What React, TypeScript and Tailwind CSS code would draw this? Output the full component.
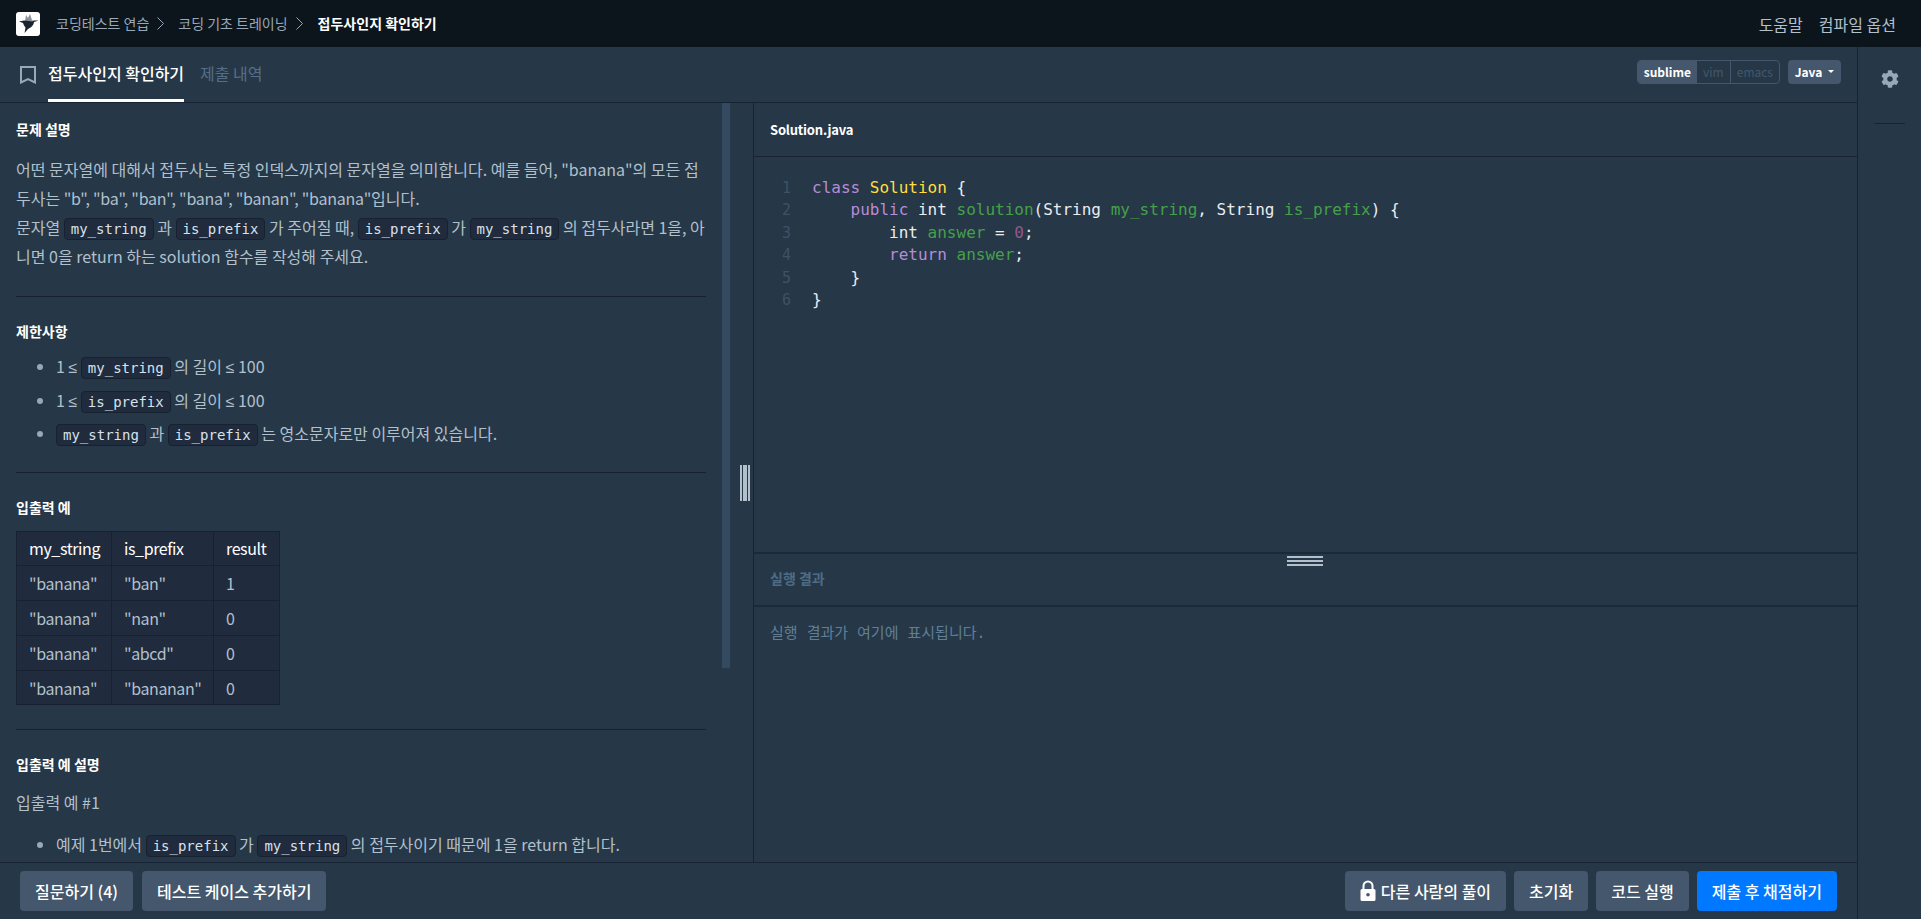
import { FaCog } from "react-icons/fa";

const sans = "font-['Noto_Sans_CJK_KR','Noto_Sans',sans-serif]";
const mono = "font-['DejaVu_Sans_Mono','Noto_Sans_CJK_KR',monospace]";

function Code({ children }: { children: string }) {
  return (
    <code className={`${mono} inline-block rounded-[4px] border border-[#172130] bg-[#202b3d] px-[6px] text-[14px] leading-[20px] text-[#d7e2eb]`}>
      {children}
    </code>
  );
}

function Le() {
  return <span className="font-['Liberation_Sans',sans-serif]">≤</span>;
}

function Heading({ children, className = "" }: { children: string; className?: string }) {
  return <h5 className={`text-[14px] leading-[20px] font-bold text-white ${className}`}>{children}</h5>;
}

function Logo() {
  return (
    <div className="flex h-6 w-6 items-center justify-center rounded-[3px] bg-white">
      <svg viewBox="0 0 24 24" className="h-6 w-6">
        <path fill="#8a929c" d="M9 9 10 3l2 3 2-4 2 6 2 1-6 3z" />
        <path fill="#1b2330" d="M3 9.500 8 8.500l5 .5 3 .5 2-1h4.500L18 10c-.5 4-4 6-6 7l-3.500 4 1-5.500C8 14 7.500 12 7 11z" />
      </svg>
    </div>
  );
}

function Lock() {
  return (
    <svg viewBox="0 0 16 22" className="h-[22px] w-4">
      <path fill="none" stroke="white" strokeWidth="2" d="M3.500 9V6a4.500 4.500 0 0 1 9 0v3" />
      <path fill="white" fillRule="evenodd" d="M2 9h12a1.500 1.500 0 0 1 1.500 1.500v9A1.500 1.500 0 0 1 14 21H2a1.500 1.500 0 0 1-1.500-1.500v-9A1.500 1.500 0 0 1 2 9zm6 4a1.800 1.800 0 1 0 0 3.600A1.800 1.800 0 0 0 8 13z" />
    </svg>
  );
}

function Crumb({ className = "" }: { className?: string }) {
  return (
    <svg viewBox="0 0 7 13" className={`h-[13px] w-[7px] ${className}`}>
      <path fill="none" stroke="#98a8b9" strokeWidth="1" d="M.5.500 6.500 6.500.5 12.500" />
    </svg>
  );
}

const rows = [
  ['"banana"', '"ban"', "1"],
  ['"banana"', '"nan"', "0"],
  ['"banana"', '"abcd"', "0"],
  ['"banana"', '"bananan"', "0"],
];

function ExampleTable() {
  return (
    <table className="mb-6 w-[264px] table-fixed border-collapse bg-[#202b3d] text-[16px] tracking-[-0.4px]">
      <thead>
        <tr className="h-[34.8px] text-white">
          <th className="w-[95px] border border-[#172130] px-3 text-left font-normal">my_string</th>
          <th className="w-[102px] border border-[#172130] px-3 text-left font-normal">is_prefix</th>
          <th className="border border-[#172130] px-3 text-left font-normal">result</th>
        </tr>
      </thead>
      <tbody>
        {rows.map((r) => (
          <tr key={r[1]} className="h-[34.8px]">
            {r.map((c, i) => (
              <td key={i} className="border border-[#172130] px-3 whitespace-nowrap">{c}</td>
            ))}
          </tr>
        ))}
      </tbody>
    </table>
  );
}

function Problem() {
  const li = "h-[33.5px] leading-[33.5px]";
  return (
    <div className="relative flex-1 overflow-hidden">
      <div className="w-[722px] px-4 pt-4 text-[16px] text-[#b2c0cc]">
        <Heading className="mb-4">문제 설명</Heading>
        <p className="mb-[25px] leading-[29px]">
          어떤 문자열에 대해서 접두사는 특정 인덱스까지의 문자열을 의미합니다. 예를 들어, "banana"의 모든 접두사는{" "}
          <span className="tracking-[-0.25px]">"b", "ba", "ban", "bana", "banan", "banana"</span>입니다.
          <br />
          문자열 <Code>my_string</Code> 과 <Code>is_prefix</Code> 가 주어질 때, <Code>is_prefix</Code> 가 <Code>my_string</Code> 의 접두사라면 1을, 아니면 0을 return 하는 solution 함수를 작성해 주세요.
        </p>
        <hr className="mb-6 border-[#172130]" />

        <Heading className="mb-[9px]">제한사항</Heading>
        <ul className="mb-[21px] list-disc pl-10 marker:text-[#98a8b9]">
          <li className={li}>1 <Le /> <Code>my_string</Code> 의 길이 <Le /> 100</li>
          <li className={li}>1 <Le /> <Code>is_prefix</Code> 의 길이 <Le /> 100</li>
          <li className={li}><Code>my_string</Code> 과 <Code>is_prefix</Code> 는 영소문자로만 이루어져 있습니다.</li>
        </ul>
        <hr className="mb-6 border-[#172130]" />

        <Heading className="mb-[14px]">입출력 예</Heading>
        <ExampleTable />
        <hr className="mb-6 border-[#172130]" />

        <Heading className="mb-[14px]">입출력 예 설명</Heading>
        <p className="mb-[11px] leading-[29px]">입출력 예 #1</p>
        <ul className="list-disc pl-10 marker:text-[#98a8b9]">
          <li className={li}>예제 1번에서 <Code>is_prefix</Code> 가 <Code>my_string</Code> 의 접두사이기 때문에 1을 return 합니다.</li>
        </ul>
      </div>
      {/* scrollbar thumb */}
      <div className="absolute top-0 left-[722px] h-[565px] w-2 bg-[#344a60]" />
    </div>
  );
}

function CodeEditor() {
  const plain = "text-[#e8edf2]";
  const kw = "text-[#b78cd8]";
  const green = "text-[#45a04a]";
  return (
    <div className={`${mono} flex h-[395px] pt-5 text-[16px] leading-[22.4px]`}>
      <div className="w-[58px] pr-[21px] text-right text-[15px] text-[#3e5266]">
        {[1, 2, 3, 4, 5, 6].map((n) => (
          <div key={n}>{n}</div>
        ))}
      </div>
      <pre className={`${mono} ${plain} ml-0`}>
        <span className={kw}>class</span> <span className="text-[#ffdf3d]">Solution</span> {"{\n"}
        {"    "}<span className={kw}>public</span> int <span className={green}>solution</span>(String <span className={green}>my_string</span>, String <span className={green}>is_prefix</span>) {"{\n"}
        {"        "}int <span className={green}>answer</span> = <span className="text-[#94578a]">0</span>;{"\n"}
        {"        "}<span className={kw}>return</span> <span className={green}>answer</span>;{"\n"}
        {"    }\n"}
        {"}"}
      </pre>
    </div>
  );
}

function Results() {
  return (
    <div className="relative flex flex-1 flex-col">
      <div className="absolute top-[4px] left-[533px] flex h-[10px] w-9 flex-col justify-between">
        <div className="h-[2px] bg-[#b2c0cc]" />
        <div className="h-[2px] bg-[#b2c0cc]" />
        <div className="h-[2px] bg-[#b2c0cc]" />
      </div>
      <div className="flex h-[55px] items-center border-t-2 border-b-2 border-[#1b2a3b] px-4 pb-[3px] text-[14px] font-bold text-[#4f6b85]">실행 결과</div>
      <div className={`${mono} px-4 pt-[15px] text-[15px] leading-[22px] text-[#5f7f98]`}>실행 결과가 여기에 표시됩니다.</div>
    </div>
  );
}

function Btn({ children, className = "bg-[#44576c]" }: { children: React.ReactNode; className?: string }) {
  return (
    <button className={`flex h-10 items-center gap-[5px] rounded-[4px] px-[15px] text-[16px] font-medium text-white ${className}`}>
      {children}
    </button>
  );
}

export default function App() {
  return (
    <div className={`${sans} flex h-[919px] w-full flex-col overflow-hidden bg-[#263747]`}>
      <header className="flex h-[47px] shrink-0 items-center justify-between bg-[#0c151c] pr-[25px] pl-4">
        <div className="flex items-center text-[14px] text-[#98a8b9]">
          <Logo />
          <span className="ml-4">코딩테스트 연습</span>
          <Crumb className="mr-[14px] ml-2" />
          <span>코딩 기초 트레이닝</span>
          <Crumb className="mr-[15px] ml-2" />
          <span className="font-bold text-white">접두사인지 확인하기</span>
        </div>
        <div className="flex gap-4 text-[16px] text-[#b2c0cc]">
          <span>도움말</span>
          <span>컴파일 옵션</span>
        </div>
      </header>

      <div className="flex min-h-0 flex-1">
        <div className="flex min-w-0 flex-1 flex-col">
          <div className="flex h-[56px] shrink-0 items-center justify-between border-b border-[#172334] pr-4 pl-5">
            <div className="flex h-full items-center">
              <svg viewBox="0 0 16 18" className="h-[18px] w-4">
                <path fill="none" stroke="#98a8b9" strokeWidth="2" d="M1 1h14v15.500l-7-3.500-7 3.500z" />
              </svg>
              <div className="ml-3 flex h-full items-center border-b-[3px] border-white text-[16px] font-medium text-white">접두사인지 확인하기</div>
              <div className="ml-4 pb-[3px] text-[16px] text-[#566f86]">제출 내역</div>
            </div>
            <div className="flex items-center gap-2 pb-[6px] text-[12px] leading-[22px]">
              <div className="flex h-6 overflow-hidden rounded-[4px] border border-[#44576c]">
                <span className="bg-[#44576c] px-[6px] font-bold text-white">sublime</span>
                <span className="border-r border-[#44576c] px-[6px] text-[#44576c]">vim</span>
                <span className="px-[6px] text-[#44576c]">emacs</span>
              </div>
              <div className="flex h-6 w-[53px] items-center justify-center gap-[6px] rounded-[4px] bg-[#44576c] font-bold text-white">
                Java
                <span className="border-x-[3px] border-t-[3px] border-x-transparent border-t-white" />
              </div>
            </div>
          </div>

          <div className="flex min-h-0 flex-1">
            <div className="relative flex w-[753px] shrink-0 flex-col">
              <Problem />
              {/* split handle */}
              <div className="absolute top-[362px] left-[740px] flex h-9 w-[10px] justify-between">
                <div className="w-[2px] bg-[#b2c0cc]" />
                <div className="w-[2px] bg-[#b2c0cc]" />
                <div className="w-[2px] bg-[#b2c0cc]" />
                <div className="w-[2px] bg-[#b2c0cc]" />
              </div>
            </div>
            <div className="flex min-w-0 flex-1 flex-col border-l border-[#172334]">
              <div className="flex h-[54px] shrink-0 items-center border-b border-[#172334] px-4 text-[13px] font-bold tracking-[-0.2px] text-white">Solution.java</div>
              <CodeEditor />
              <Results />
            </div>
          </div>

          <div className="flex h-[57px] shrink-0 items-center justify-between border-t border-[#172334] pr-5 pl-5">
            <div className="flex gap-[9px]">
              <Btn>질문하기 (4)</Btn>
              <Btn>테스트 케이스 추가하기</Btn>
            </div>
            <div className="flex gap-2">
              <Btn><Lock />다른 사람의 풀이</Btn>
              <Btn>초기화</Btn>
              <Btn>코드 실행</Btn>
              <Btn className="bg-[#0078ff]">제출 후 채점하기</Btn>
            </div>
          </div>
        </div>

        <aside className="flex w-[64px] shrink-0 flex-col items-center border-l border-[#172334] pt-[23px]">
          <FaCog className="h-[18px] w-[18px] text-[#98a8b9]" />
          <div className="mt-[35px] h-px w-[31px] bg-[#172334]" />
        </aside>
      </div>
    </div>
  );
}
